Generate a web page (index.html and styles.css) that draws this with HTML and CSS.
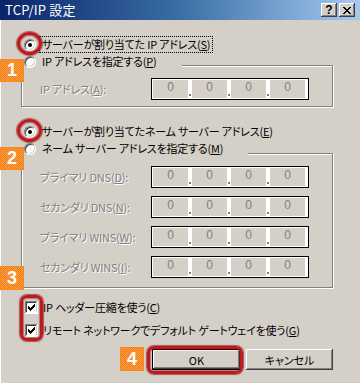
FILE: index.html
```html
<!DOCTYPE html>
<html lang="ja">
<head>
<meta charset="utf-8">
<title>TCP/IP 設定</title>
<link rel="stylesheet" href="styles.css">
</head>
<body>
<div class="window">
  <div class="titlebar">
    <span class="title">TCP/IP 設定</span>
    <div class="tbtns">
      <span class="tbtn help">?</span>
      <span class="tbtn close"><svg width="8" height="7" viewBox="0 0 8 7"><path fill="#000" d="M0 0h2v1H0zM6 0h2v1H6zM1 1h2v1H1zM5 1h2v1H5zM2 2h4v1H2zM3 3h2v1H3zM2 4h4v1H2zM1 5h2v1H1zM5 5h2v1H5zM0 6h2v1H0zM6 6h2v1H6z"/></svg></span>
    </div>
  </div>

  <div class="content">
    <div class="row first">
      <span class="radio on"></span>
      <span class="lbl focus">サーバーが割り当てた IP アドレス(<u>S</u>)</span>
    </div>

    <div class="group g1">
      <div class="row caption c1">
        <span class="radio"></span>
        <span class="lbl">IP アドレスを指定する(<u>P</u>)</span>
      </div>
      <div class="field-row">
        <span class="dis">IP アドレス(<u>A</u>):</span>
        <div class="ipbox"><span class="oct">0</span><span class="dot"></span><span class="oct">0</span><span class="dot"></span><span class="oct">0</span><span class="dot"></span><span class="oct">0</span></div>
      </div>
    </div>

    <div class="row r3">
      <span class="radio on"></span>
      <span class="lbl">サーバーが割り当てたネーム サーバー アドレス(<u>E</u>)</span>
    </div>

    <div class="group g2">
      <div class="row caption c2">
        <span class="radio"></span>
        <span class="lbl">ネーム サーバー アドレスを指定する(<u>M</u>)</span>
      </div>
      <div class="field-row">
        <span class="dis">プライマリ DNS(<u>D</u>):</span>
        <div class="ipbox"><span class="oct">0</span><span class="dot"></span><span class="oct">0</span><span class="dot"></span><span class="oct">0</span><span class="dot"></span><span class="oct">0</span></div>
      </div>
      <div class="field-row">
        <span class="dis">セカンダリ DNS(<u>N</u>):</span>
        <div class="ipbox"><span class="oct">0</span><span class="dot"></span><span class="oct">0</span><span class="dot"></span><span class="oct">0</span><span class="dot"></span><span class="oct">0</span></div>
      </div>
      <div class="field-row">
        <span class="dis">プライマリ WINS(<u>W</u>):</span>
        <div class="ipbox"><span class="oct">0</span><span class="dot"></span><span class="oct">0</span><span class="dot"></span><span class="oct">0</span><span class="dot"></span><span class="oct">0</span></div>
      </div>
      <div class="field-row">
        <span class="dis">セカンダリ WINS(<u>I</u>):</span>
        <div class="ipbox"><span class="oct">0</span><span class="dot"></span><span class="oct">0</span><span class="dot"></span><span class="oct">0</span><span class="dot"></span><span class="oct">0</span></div>
      </div>
    </div>

    <div class="checks">
      <div class="crow">
        <svg class="cb" width="13" height="13" viewBox="0 0 13 13"><rect width="13" height="13" fill="#fff"/><path fill="#808080" d="M0 0h12v1H1v11H0z"/><path fill="#404040" d="M1 1h10v1H2v9H1z"/><path fill="#d4d0c8" d="M1 11h11V1h-1v10H1z"/><path fill="#000" d="M9 3h1v1H9zM8 4h2v1H8zM3 5h1v1H3zM7 5h3v1H7zM3 6h2v1H3zM6 6h3v1H6zM3 7h5v1H3zM4 8h3v1H4zM5 9h1v1H5z"/></svg>
        <span class="lbl">IP ヘッダー圧縮を使う(<u>C</u>)</span>
      </div>
      <div class="crow">
        <svg class="cb" width="13" height="13" viewBox="0 0 13 13"><rect width="13" height="13" fill="#fff"/><path fill="#808080" d="M0 0h12v1H1v11H0z"/><path fill="#404040" d="M1 1h10v1H2v9H1z"/><path fill="#d4d0c8" d="M1 11h11V1h-1v10H1z"/><path fill="#000" d="M9 3h1v1H9zM8 4h2v1H8zM3 5h1v1H3zM7 5h3v1H7zM3 6h2v1H3zM6 6h3v1H6zM3 7h5v1H3zM4 8h3v1H4zM5 9h1v1H5z"/></svg>
        <span class="lbl">リモート ネットワークでデフォルト ゲートウェイを使う(<u>G</u>)</span>
      </div>
    </div>

    <div class="buttons">
      <button class="btn default">OK</button>
      <button class="btn">キャンセル</button>
    </div>
  </div>

  <span class="ring ring1"></span>
  <span class="ring ring2"></span>
  <span class="ring ring3"></span>
  <span class="ring ring4"></span>

  <span class="badge b1">1</span>
  <span class="badge b2">2</span>
  <span class="badge b3">3</span>
  <span class="badge b4">4</span>
</div>
</body>
</html>
```

FILE: styles.css
```css
* { box-sizing: border-box; }
html, body { margin: 0; padding: 0; }
body {
  font-family: "Noto Sans CJK JP", "Noto Sans", sans-serif;
  font-size: 11px;
  letter-spacing: -0.2px;
  font-feature-settings: "palt";
  color: #000;
  background: #d4d0c8;
}
u { text-decoration: underline; text-underline-offset: 1px; }

.window {
  position: relative;
  width: 360px;
  height: 383px;
  background: #d4d0c8;
  overflow: hidden;
  box-shadow: inset 1px 0 0 #fff;
}

.titlebar {
  height: 20px;
  display: flex;
  align-items: center;
  padding-left: 5px;
  background: linear-gradient(to right, #0a246a 0%, #3a6ea5 50%, #a6caf0 100%);
}
.title {
  color: #fff;
  font-size: 13px;
  line-height: 16px;
  letter-spacing: 0.2px;
}
.tbtns {
  margin-left: auto;
  margin-right: 5px;
  display: flex;
  gap: 2px;
}
.tbtn {
  width: 16px;
  height: 14px;
  display: flex;
  align-items: center;
  justify-content: center;
  background: #d4d0c8;
  box-shadow: inset -1px -1px #404040, inset 1px 1px #fff, inset -2px -2px #808080;
}
.tbtn.help {
  font-family: "Liberation Sans", sans-serif;
  font-weight: bold;
  font-size: 12px;
  line-height: 14px;
  letter-spacing: 0;
}

.content {
  padding: 0 27px 0 21px;
}

.row {
  display: flex;
  align-items: center;
  height: 17px;
  padding-left: 3px;
  line-height: 15px;
}
.row.first { margin-top: 16px; }
.lbl { padding: 0 2px; margin-left: 4px; white-space: nowrap; }
.lbl.focus { outline: 1px dotted #000; outline-offset: 0; }

.radio {
  position: relative;
  flex: none;
  width: 12px;
  height: 12px;
  border-radius: 50%;
  background: #fff;
  border: 1px solid;
  border-color: #808080 #fff #fff #808080;
  box-shadow: inset 1px 1px 0 #404040, inset -1px -1px 0 #d4d0c8;
}
.radio.on::after {
  content: "";
  position: absolute;
  left: 3px;
  top: 3px;
  width: 4px;
  height: 4px;
  border-radius: 50%;
  background: #000;
}

.group {
  border: 1px solid #808080;
  box-shadow: inset 1px 1px 0 #fff, 1px 1px 0 #fff;
}
.caption {
  background: #d4d0c8;
  padding-left: 2px;
}
.c1 { width: 160px; margin-top: -13px; }
.c2 { width: 226px; margin-top: -14px; }

.g1 { margin-top: 12px; padding: 0 0 6px 0; }
.g1 .field-row { margin-top: 8px; }
.r3 { margin-top: 16px; }
.g2 { margin-top: 13px; padding: 0 0 9px 0; }
.g2 .field-row { margin-top: 8px; }
.g2 .field-row:nth-child(2) { margin-top: 9px; }

.field-row {
  display: flex;
  align-items: center;
  height: 22px;
  padding-left: 18px;
}
.dis {
  color: #808080;
  text-shadow: 1px 1px 0 #fff;
  white-space: nowrap;
}
.ipbox {
  margin-left: auto;
  margin-right: 23px;
  width: 158px;
  height: 22px;
  border: 1px solid #000;
  background: #fff;
  padding: 1px 2px 1px 1px;
  display: flex;
}
.oct {
  width: 35px;
  height: 18px;
  background: #d4d0c8;
  color: #808080;
  text-align: center;
  line-height: 14px;
  font-family: "Liberation Sans", sans-serif;
  font-size: 12px;
  letter-spacing: 0;
}
.dot {
  width: 4px;
  position: relative;
}
.dot::after {
  content: "";
  position: absolute;
  left: 1px;
  bottom: 2px;
  width: 2px;
  height: 2px;
  background: #808080;
}

.checks { margin-top: 11px; }
.crow {
  display: flex;
  align-items: center;
  height: 17px;
  padding-left: 4px;
  line-height: 15px;
}
.crow + .crow { margin-top: 6px; }
.crow .lbl { margin-left: 5px; padding: 0; }
.cb { flex: none; display: block; }

.buttons {
  display: flex;
  justify-content: flex-end;
  gap: 5px;
  margin-top: 10px;
}
.btn {
  font: inherit;
  font-feature-settings: "palt";
  letter-spacing: 0;
  color: #000;
  width: 87px;
  height: 21px;
  padding: 0;
  border: none;
  background: #d4d0c8;
  box-shadow: inset -1px -1px #404040, inset 1px 1px #fff, inset -2px -2px #808080;
}
.btn.default {
  width: 89px;
  border: 1px solid #000;
}

.ring {
  position: absolute;
  border: 3px solid #c4161c;
  box-shadow: 0 0 1px 1px rgba(100, 0, 0, 0.55), inset 0 0 1px 1px rgba(100, 0, 0, 0.4);
}
.ring1 { left: 17px; top: 32px; width: 25px; height: 23px; border-radius: 50%; }
.ring2 { left: 17px; top: 119px; width: 25px; height: 23px; border-radius: 50%; }
.ring3 { left: 20px; top: 295px; width: 23px; height: 46px; border-radius: 7px; }
.ring4 { left: 147px; top: 346px; width: 96px; height: 28px; border-radius: 7px; }

.badge {
  position: absolute;
  width: 24px;
  height: 23px;
  display: flex;
  align-items: center;
  justify-content: center;
  color: #fff;
  font-family: "Liberation Sans", sans-serif;
  font-weight: bold;
  font-size: 18px;
  letter-spacing: 0;
  background: repeating-conic-gradient(#f47a12 0 25%, #fba047 0 50%) 0 0 / 2px 2px;
  box-shadow: inset 0 0 0 1px #f58a1f;
}
.b1 { left: 0; top: 59px; }
.b2 { left: 0; top: 147px; }
.b3 { left: 0; top: 266px; height: 24px; }
.b4 { left: 120px; top: 347px; height: 24px; }
```
